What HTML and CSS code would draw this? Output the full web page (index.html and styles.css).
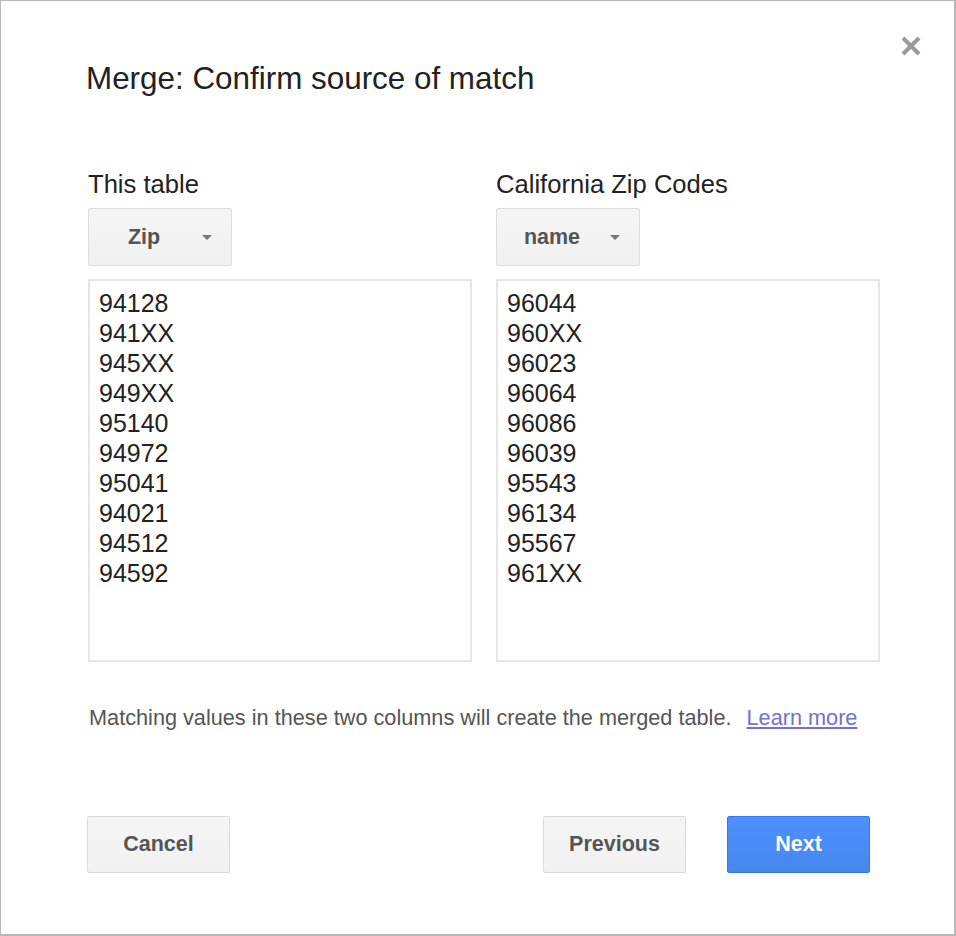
FILE: index.html
```html
<!DOCTYPE html>
<html>
<head>
<meta charset="utf-8">
<link rel="stylesheet" href="styles.css">
</head>
<body>
<div class="dialog">
  <button class="close" aria-label="Close">
    <svg width="22" height="22" viewBox="0 0 22 22"><path d="M3 3 L19 19 M19 3 L3 19" stroke="#9a9a9a" stroke-width="4" stroke-linecap="butt"/></svg>
  </button>
  <h1 class="title">Merge: Confirm source of match</h1>
  <div class="columns">
    <div class="col">
      <div class="label">This table</div>
      <div class="dropdown"><span class="dd-text">Zip</span><span class="arrow"></span></div>
      <div class="list">
        <div>94128</div><div>941XX</div><div>945XX</div><div>949XX</div><div>95140</div>
        <div>94972</div><div>95041</div><div>94021</div><div>94512</div><div>94592</div>
      </div>
    </div>
    <div class="col">
      <div class="label">California Zip Codes</div>
      <div class="dropdown"><span class="dd-text">name</span><span class="arrow"></span></div>
      <div class="list">
        <div>96044</div><div>960XX</div><div>96023</div><div>96064</div><div>96086</div>
        <div>96039</div><div>95543</div><div>96134</div><div>95567</div><div>961XX</div>
      </div>
    </div>
  </div>
  <p class="note">Matching values in these two columns will create the merged table.<a class="learn" href="#">Learn more</a></p>
  <div class="actions">
    <button class="btn">Cancel</button>
    <div class="right">
      <button class="btn">Previous</button>
      <button class="btn primary">Next</button>
    </div>
  </div>
</div>
</body>
</html>
```
FILE: styles.css
```css
html, body {
  margin: 0;
  padding: 0;
  background: #fff;
}
.dialog {
  position: relative;
  box-sizing: border-box;
  width: 956px;
  height: 936px;
  border: 1px solid #b8b8b8;
  border-right-width: 2px;
  border-bottom-width: 2px;
  padding: 0 0 0 86px;
  font-family: "Liberation Sans", Arial, sans-serif;
  color: #222;
  background: #fff;
}
.close {
  position: absolute;
  top: 34px;
  left: 899px;
  width: 22px;
  height: 22px;
  padding: 0;
  border: 0;
  background: none;
  display: block;
}
.close svg { display: block; }
.title {
  margin: 60px 0 0 -1px;
  font-size: 31.4px;
  line-height: 36px;
  font-weight: normal;
  color: #222;
}
.columns {
  display: grid;
  grid-template-columns: 384px 384px;
  column-gap: 24px;
  margin: 72px 0 0 1px;
}
.col {
  display: flex;
  flex-direction: column;
  align-items: flex-start;
}
.label {
  font-size: 25.6px;
  line-height: 30px;
  color: #222;
}
.dropdown {
  position: relative;
  box-sizing: border-box;
  width: 144px;
  height: 58px;
  margin-top: 9px;
  padding-right: 32px;
  border: 1px solid #dcdcdc;
  border-radius: 2px;
  background: linear-gradient(#f5f5f5, #f1f1f1);
  display: flex;
  align-items: center;
  justify-content: center;
}
.dd-text {
  font-weight: bold;
  font-size: 21.5px;
  color: #555;
}
.arrow {
  position: absolute;
  right: 19px;
  top: 26px;
  width: 0;
  height: 0;
  border-left: 5px solid transparent;
  border-right: 5px solid transparent;
  border-top: 5px solid #777;
}
.list {
  box-sizing: border-box;
  width: 384px;
  height: 383px;
  margin-top: 13px;
  border: 2px solid #e6e6e6;
  padding: 7px 0 0 9px;
  font-size: 25px;
  line-height: 30px;
  color: #222;
}
.note {
  margin: 43px 0 0 2px;
  font-size: 21.7px;
  line-height: 26px;
  color: #555;
}
.learn {
  margin-left: 15px;
  color: #7272cf;
  text-decoration: underline;
}
.actions {
  display: flex;
  justify-content: space-between;
  width: 783px;
  margin-top: 85px;
}
.right {
  display: flex;
  gap: 41px;
}
.btn {
  box-sizing: border-box;
  width: 143px;
  height: 57px;
  padding: 0;
  border: 1px solid #d9d9d9;
  border-radius: 2px;
  background: linear-gradient(#f5f5f5, #f1f1f1);
  font-family: "Liberation Sans", Arial, sans-serif;
  font-weight: bold;
  font-size: 21.5px;
  color: #555;
}
.btn.primary {
  border-color: #3079ed;
  background: linear-gradient(#4d90fe, #4787ed);
  color: #fff;
}
```
